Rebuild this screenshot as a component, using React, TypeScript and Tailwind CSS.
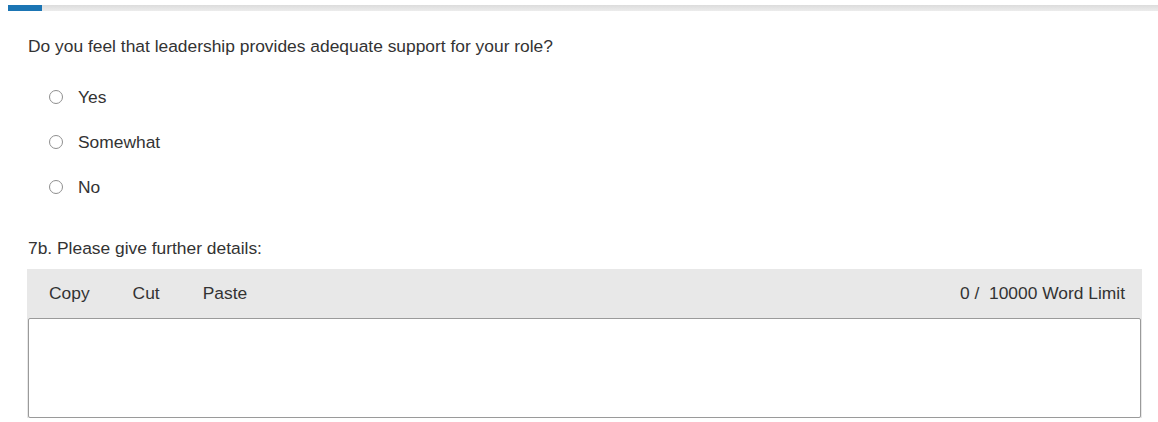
import React from "react";

function Radio({ label }: { label: string }) {
  return (
    <label className="flex items-center h-[20px]">
      <span className="w-[14px] h-[14px] rounded-full border border-[#8f8f8f] bg-white ml-[22px]" />
      <span className="ml-[15px] text-[17.4px] text-[#333]">{label}</span>
    </label>
  );
}

export default function App() {
  return (
    <div className="w-[1158px] h-[422px] bg-white overflow-hidden" style={{ fontFamily: '"Liberation Sans", Arial, sans-serif' }}>
      <div className="pt-[5px] pl-[8px]">
        <div className="h-[6px] bg-gradient-to-b from-[#dcdcdc] to-[#ececec] flex">
          <div className="w-[34px] h-full bg-[#1b75b4]" />
        </div>
      </div>
      <div className="pl-[27px] pr-[16px]">
        <div className="mt-[24px] text-[17.4px] leading-[22px] text-[#333] pl-[1px]">
          Do you feel that leadership provides adequate support for your role?
        </div>
        <div className="mt-[30px] flex flex-col gap-[25px]">
          <Radio label="Yes" />
          <Radio label="Somewhat" />
          <Radio label="No" />
        </div>
        <div className="mt-[40px] text-[17.4px] leading-[22px] text-[#333] pl-[1px]">
          7b. Please give further details:
        </div>
        <div className="mt-[10px] bg-[#e8e8e8]">
          <div className="h-[49px] flex items-center text-[17.4px] text-[#333]">
            <span className="ml-[22px]">Copy</span>
            <span className="ml-[43px]">Cut</span>
            <span className="ml-[43px]">Paste</span>
            <span className="ml-auto mr-[17px]">0 /&nbsp; 10000 Word Limit</span>
          </div>
          <div className="h-[100px] bg-white border border-[#9a9a9a] rounded-[2px] ml-[1px] mr-[1px]" />
        </div>
      </div>
    </div>
  );
}
